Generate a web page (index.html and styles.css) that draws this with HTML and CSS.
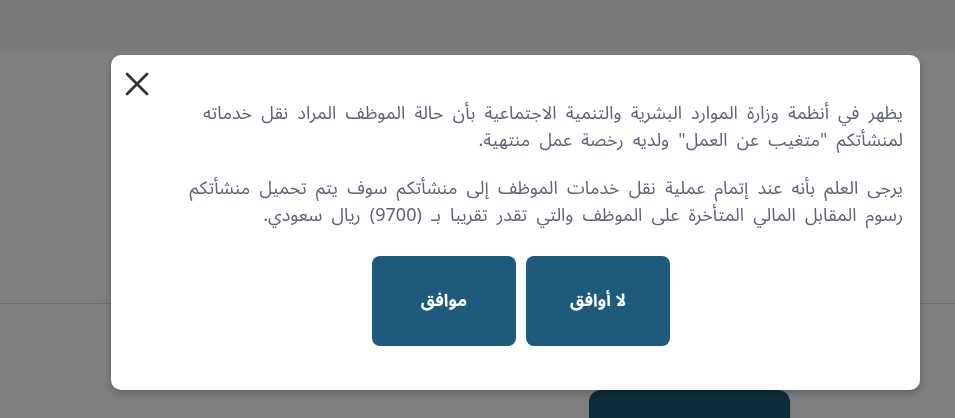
FILE: index.html
```html
<!DOCTYPE html>
<html lang="ar" dir="rtl">
<head>
<meta charset="utf-8">
<link rel="stylesheet" href="styles.css">
</head>
<body>
<div class="page">
  <header class="topbar"></header>
  <main class="content">
    <div class="divider"></div>
    <div class="page-actions"><button class="page-btn"></button></div>
  </main>
</div>
<div class="overlay">
  <div class="modal">
    <button class="close" aria-label="close">
      <svg width="24" height="24" viewBox="0 0 24 24"><path d="M2 2 L22 22 M22 2 L2 22" stroke="#333" stroke-width="2.8" stroke-linecap="round" fill="none"/></svg>
    </button>
    <div class="body">
      <p>يظهر في أنظمة وزارة الموارد البشرية والتنمية الاجتماعية بأن حالة الموظف المراد نقل خدماته لمنشأتكم "متغيب عن العمل" ولديه رخصة عمل منتهية.</p>
      <p>يرجى العلم بأنه عند إتمام عملية نقل خدمات الموظف إلى منشأتكم سوف يتم تحميل منشأتكم رسوم المقابل المالي المتأخرة على الموظف والتي تقدر تقريبا بـ (9700) ريال سعودي.</p>
    </div>
    <div class="actions">
      <button class="btn">لا أوافق</button>
      <button class="btn">موافق</button>
    </div>
  </div>
</div>
</body>
</html>
```
FILE: styles.css
```css
* { box-sizing: border-box; }
html, body { margin: 0; padding: 0; }
body {
  width: 955px;
  height: 418px;
  overflow: hidden;
  background: #ffffff;
  font-family: "Noto Sans Arabic", "DejaVu Sans", "Noto Sans", sans-serif;
}
.page { height: 418px; overflow: hidden; }
.topbar { height: 51px; background: #f5f5f5; }
.content { padding-top: 252px; }
.divider { height: 1px; background: #dcdce4; }
.page-actions { padding-top: 86px; padding-right: 165px; display: flex; }
.page-btn {
  width: 201px; height: 60px; border: 0;
  background: #1c5678; border-radius: 12px;
}
.overlay {
  position: fixed; inset: 0;
  background: rgba(0, 0, 0, 0.5);
}
.modal {
  position: absolute;
  left: 111px; top: 55px;
  width: 809px; height: 335px;
  background: #fff;
  border-radius: 10px;
  box-shadow: 0 3px 8px rgba(0,0,0,0.25);
  padding: 17px 17px 0 17px;
}
.close {
  position: absolute; left: 14px; top: 17px;
  width: 24px; height: 24px; padding: 0;
  border: 0; background: none;
}
.body {
  padding-top: 28px; color: #5b6478;
  font-size: 18px; line-height: 27px;
  width: 722px;
  word-spacing: 4.5px;
}
.body p { margin: 0 0 21px 0; }
.body p:last-child { margin-bottom: 0; }
.actions {
  display: flex; justify-content: center; gap: 10px;
  margin-top: 27px; padding-left: 11px;
}
.btn {
  width: 144px; height: 90px; border: 0;
  background: #1d5a7b; color: #fff;
  border-radius: 8px;
  font-family: inherit; font-size: 17px; font-weight: bold;
}
```
